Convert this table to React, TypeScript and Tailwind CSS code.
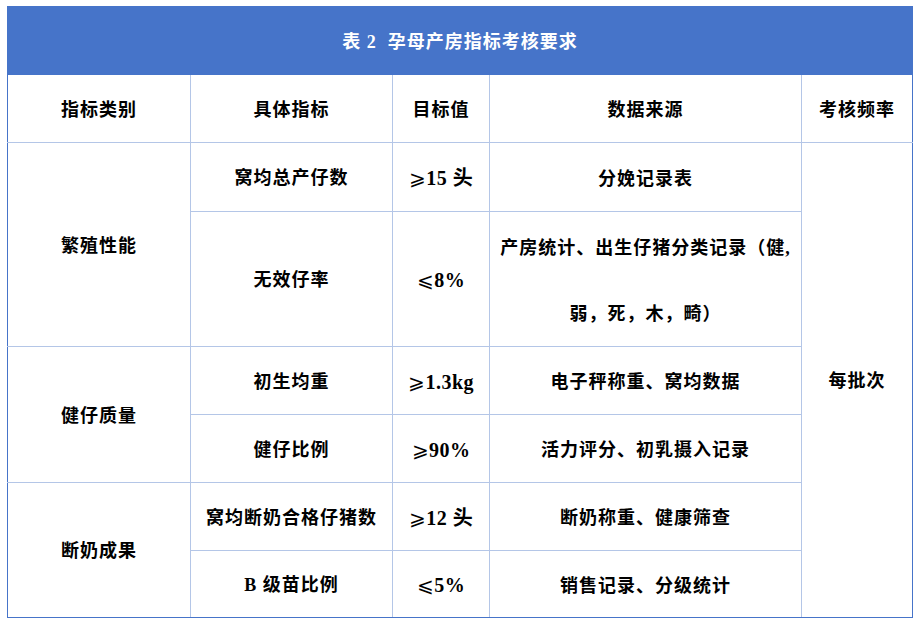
const rows = [
  { group: "繁殖性能", span: 2, name: "窝均总产仔数", sign: "⩾", target: "15 头", source: "分娩记录表", h: "h-[69px]" },
  { name: "无效仔率", sign: "⩽", target: "8%", source: "产房统计、出生仔猪分类记录（健,\n弱，死，木，畸）", h: "h-[135px]" },
  { group: "健仔质量", span: 2, name: "初生均重", sign: "⩾", target: "1.3kg", source: "电子秤称重、窝均数据", h: "h-[68px]" },
  { name: "健仔比例", sign: "⩾", target: "90%", source: "活力评分、初乳摄入记录", h: "h-[68px]" },
  { group: "断奶成果", span: 2, name: "窝均断奶合格仔猪数", sign: "⩾", target: "12 头", source: "断奶称重、健康筛查", h: "h-[68px]" },
  { name: "B 级苗比例", sign: "⩽", target: "5%", source: "销售记录、分级统计", h: "h-[67px]" },
];

const cell = "border border-[#b4c6e7] text-center align-middle p-0";
const nudge = "block translate-y-[2px]";

export default function App() {
  return (
    <div
      className="w-[922px] h-[624px] bg-white pl-[7px] pt-[6px] text-black font-bold text-[18px] tracking-[1px]"
      style={{ fontFamily: '"Liberation Serif", "Noto Sans CJK SC", serif' }}
    >
      <div className="w-[906px]">
        <div className="h-[69px] pt-[4px] bg-[#4674c9] flex items-center justify-center text-white">
          表 2&nbsp;&nbsp;孕母产房指标考核要求
        </div>
        <table className="w-[906px] border-collapse table-fixed border-x border-b border-[#4674c9]">
          <colgroup>
            <col className="w-[183px]" />
            <col className="w-[202px]" />
            <col className="w-[97px]" />
            <col className="w-[312px]" />
            <col className="w-[111px]" />
          </colgroup>
          <tbody>
            <tr className="h-[67px]">
              <td className={cell + " border-t-0 border-l-[#4674c9]"}><span className={nudge}>指标类别</span></td>
              <td className={cell + " border-t-0"}><span className={nudge}>具体指标</span></td>
              <td className={cell + " border-t-0"}><span className={nudge}>目标值</span></td>
              <td className={cell + " border-t-0"}><span className={nudge}>数据来源</span></td>
              <td className={cell + " border-t-0 border-r-[#4674c9]"}><span className={nudge}>考核频率</span></td>
            </tr>
            {rows.map((r, i) => (
              <tr key={i} className={r.h}>
                {r.group && (
                  <td rowSpan={r.span} className={cell + " border-l-[#4674c9]" + (i === 4 ? " border-b-[#4674c9]" : "")}>
                    <span className={nudge}>{r.group}</span>
                  </td>
                )}
                <td className={cell + (i === 5 ? " border-b-[#4674c9]" : "")}>
                  <span className={nudge}>{r.name}</span>
                </td>
                <td className={cell + (i === 5 ? " border-b-[#4674c9]" : "")}>
                  <span className={nudge + " leading-[27px] text-[20px] tracking-[0.5px]"}>
                    <span className="font-normal" style={{ fontFamily: '"DejaVu Serif", serif' }}>
                      {r.sign}
                    </span>
                    {r.target}
                  </span>
                </td>
                <td className={cell + (i === 5 ? " border-b-[#4674c9]" : "")}>
                  <span className={nudge + " leading-[66px] whitespace-pre-line"}>{r.source}</span>
                </td>
                {i === 0 && (
                  <td rowSpan={6} className={cell + " border-r-[#4674c9] border-b-[#4674c9]"}>
                    <span className={nudge}>每批次</span>
                  </td>
                )}
              </tr>
            ))}
          </tbody>
        </table>
      </div>
    </div>
  );
}
